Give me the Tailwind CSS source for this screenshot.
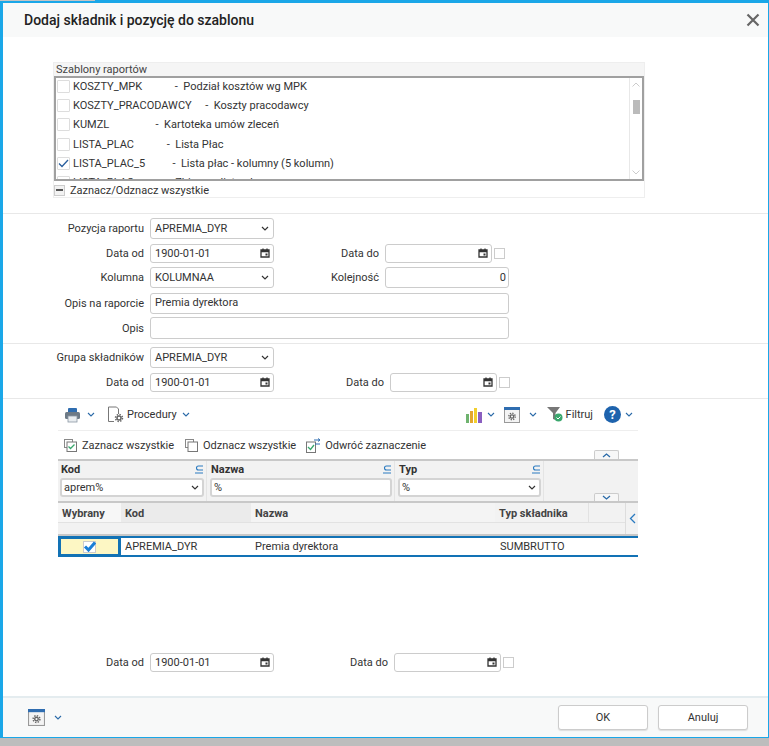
<!DOCTYPE html>
<html lang="pl">
<head>
<meta charset="UTF-8">
<title>Dodaj składnik i pozycję do szablonu</title>
<script src="https://cdn.jsdelivr.net/npm/@tailwindcss/browser@4"></script>
</head>
<body class="m-0 bg-[#bdbdbd] font-['Roboto',sans-serif] text-[11px] leading-none text-[#333]">
<div class="relative w-[769px] h-[746px] overflow-hidden flex flex-col">
  <div class="absolute left-0 top-0 w-[95px] h-[1px] bg-[#c4c4c4]"></div>
  <!-- dialog -->
  <div class="h-[738px] bg-white border-t-[3px] border-l-[3px] border-r border-b border-[#1aa7e8] flex flex-col">
    <!-- header -->
    <div class="h-[34px] shrink-0 bg-[#f8f9f9] flex items-center justify-between pl-[21px] pr-[8px]">
      <span class="text-[14px] font-medium text-[#222]">Dodaj składnik i pozycję do szablonu</span>
      <svg width="14" height="14" viewBox="0 0 14 14"><path d="M1.500 1.500l11 11M12.500 1.500l-11 11" stroke="#666" stroke-width="2.200"/></svg>
    </div>

    <!-- templates panel -->
    <div class="ml-[50px] mt-[25px] w-[592px] h-[136px] shrink-0 border border-[#eee] flex flex-col">
      <div class="h-[13px] shrink-0 bg-[#f5f5f5] pl-[2px] text-[#444] leading-[14px]">Szablony raportów</div>
      <div class="h-[105px] shrink-0 border-2 border-[#a0a0a0] flex overflow-hidden">
        <div class="flex-1 -mt-[1px] overflow-hidden">
          <div class="h-[19px] flex items-center pl-[1px]"><span class="w-[13px] h-[13px] border border-[#ddd] rounded-[1px] mr-[3px]"></span><span class="whitespace-pre">KOSZTY_MPK            -  Podział kosztów wg MPK</span></div>
          <div class="h-[19px] flex items-center pl-[1px]"><span class="w-[13px] h-[13px] border border-[#ddd] rounded-[1px] mr-[3px]"></span><span class="whitespace-pre">KOSZTY_PRACODAWCY     -  Koszty pracodawcy</span></div>
          <div class="h-[19px] flex items-center pl-[1px]"><span class="w-[13px] h-[13px] border border-[#ddd] rounded-[1px] mr-[3px]"></span><span class="whitespace-pre">KUMZL                 -  Kartoteka umów zleceń</span></div>
          <div class="h-[20px] flex items-center pl-[1px]"><span class="w-[13px] h-[13px] border border-[#ddd] rounded-[1px] mr-[3px]"></span><span class="whitespace-pre">LISTA_PLAC            -  Lista Płac</span></div>
          <div class="h-[19px] flex items-center pl-[1px]"><span class="w-[13px] h-[13px] border border-[#ddd] rounded-[1px] mr-[3px] flex items-center justify-center"><svg width="11" height="9" viewBox="0 0 11 9"><path d="M1 4.500l3 3 6-6.500" fill="none" stroke="#2a5f9e" stroke-width="1.300"/></svg></span><span class="whitespace-pre">LISTA_PLAC_5          -  Lista płac - kolumny (5 kolumn)</span></div>
          <div class="h-[19px] flex items-center pl-[1px]"><span class="w-[13px] h-[13px] border border-[#ddd] rounded-[1px] mr-[3px]"></span><span class="whitespace-pre">LISTA_PLAC            -  Zbiorcza lista płac</span></div>
        </div>
        <div class="w-[13px] shrink-0 border-l border-[#e8e8e8] flex flex-col items-center py-[4px]">
          <svg width="8" height="5" viewBox="0 0 8 5"><path d="M.5 4.500L4 1l3.500 3.500" fill="none" stroke="#ccc"/></svg>
          <div class="w-[7px] h-[14px] bg-[#bbb] mt-[13px]"></div>
          <svg class="mt-auto" width="8" height="5" viewBox="0 0 8 5"><path d="M.5 .5L4 4 7.500 .5" fill="none" stroke="#ccc"/></svg>
        </div>
      </div>
      <div class="flex-1 flex items-center pt-[2px]">
        <span class="w-[11px] h-[11px] border border-[#ccc] bg-[#f2f2f2] flex items-center justify-center mr-[5px]"><span class="w-[7px] h-[1.500px] bg-[#555]"></span></span>
        <span>Zaznacz/Odznacz wszystkie</span>
      </div>
    </div>

    <!-- report position form -->
    <div class="mt-[15px] border-t border-[#e8e8e8] pt-[3px] h-[130px] shrink-0 flex flex-col">
      <div class="h-[22px] flex items-center">
        <label class="w-[141px] text-right mr-[6px]">Pozycja raportu</label>
        <div class="w-[124px] h-[21px] border border-[#ccc] rounded-[3px] flex items-center justify-between px-[4px]"><span>APREMIA_DYR</span><svg width="8" height="5" viewBox="0 0 8 5"><path d="M1 1l3 3 3-3" fill="none" stroke="#333" stroke-width="1.200"/></svg></div>
      </div>
      <div class="h-[20px] mt-[4px] flex items-center">
        <label class="w-[141px] text-right mr-[6px]">Data od</label>
        <div class="w-[124px] h-[19px] border border-[#ccc] rounded-[3px] flex items-center justify-between pl-[4px] pr-[3px]"><span>1900-01-01</span><svg width="10" height="10" viewBox="0 0 10 10"><path d="M1 2h8v7H1zM1 3.500h8M3 .5v2M7 .5v2" fill="none" stroke="#333" stroke-width="1.300"/><rect x="5.500" y="5.500" width="2" height="2" fill="#333"/></svg></div>
        <label class="w-[105px] text-right mr-[6px]">Data do</label>
        <div class="w-[107px] h-[19px] border border-[#ccc] rounded-[3px] flex items-center justify-end pr-[3px]"><svg width="10" height="10" viewBox="0 0 10 10"><path d="M1 2h8v7H1zM1 3.500h8M3 .5v2M7 .5v2" fill="none" stroke="#333" stroke-width="1.300"/><rect x="5.500" y="5.500" width="2" height="2" fill="#333"/></svg></div>
        <span class="ml-[2px] w-[11px] h-[11px] border border-[#ccc]"></span>
      </div>
      <div class="h-[21px] mt-[4px] flex items-center">
        <label class="w-[141px] text-right mr-[6px]">Kolumna</label>
        <div class="w-[124px] h-[21px] border border-[#ccc] rounded-[3px] flex items-center justify-between px-[4px]"><span>KOLUMNAA</span><svg width="8" height="5" viewBox="0 0 8 5"><path d="M1 1l3 3 3-3" fill="none" stroke="#333" stroke-width="1.200"/></svg></div>
        <label class="w-[105px] text-right mr-[6px]">Kolejność</label>
        <div class="w-[124px] h-[21px] border border-[#ccc] rounded-[3px] flex items-center justify-end pr-[2px]">0</div>
      </div>
      <div class="h-[21px] mt-[5px] flex items-center">
        <label class="w-[141px] text-right mr-[6px]">Opis na raporcie</label>
        <div class="w-[359px] h-[21px] border border-[#ccc] rounded-[3px] flex items-center pl-[4px] pb-[2px]">Premia dyrektora</div>
      </div>
      <div class="h-[22px] mt-[3px] flex items-center">
        <label class="w-[141px] text-right mr-[6px]">Opis</label>
        <div class="w-[359px] h-[22px] border border-[#ccc] rounded-[3px]"></div>
      </div>
    </div>

    <!-- component group form -->
    <div class="border-t border-[#e8e8e8] pt-[3px] h-[55px] shrink-0 flex flex-col">
      <div class="h-[21px] flex items-center">
        <label class="w-[141px] text-right mr-[6px]">Grupa składników</label>
        <div class="w-[124px] h-[21px] border border-[#ccc] rounded-[3px] flex items-center justify-between px-[4px]"><span>APREMIA_DYR</span><svg width="8" height="5" viewBox="0 0 8 5"><path d="M1 1l3 3 3-3" fill="none" stroke="#333" stroke-width="1.200"/></svg></div>
      </div>
      <div class="h-[20px] mt-[4px] flex items-center">
        <label class="w-[141px] text-right mr-[6px]">Data od</label>
        <div class="w-[124px] h-[19px] border border-[#ccc] rounded-[3px] flex items-center justify-between pl-[4px] pr-[3px]"><span>1900-01-01</span><svg width="10" height="10" viewBox="0 0 10 10"><path d="M1 2h8v7H1zM1 3.500h8M3 .5v2M7 .5v2" fill="none" stroke="#333" stroke-width="1.300"/><rect x="5.500" y="5.500" width="2" height="2" fill="#333"/></svg></div>
        <label class="w-[110px] text-right mr-[6px]">Data do</label>
        <div class="w-[107px] h-[19px] border border-[#ccc] rounded-[3px] flex items-center justify-end pr-[3px]"><svg width="10" height="10" viewBox="0 0 10 10"><path d="M1 2h8v7H1zM1 3.500h8M3 .5v2M7 .5v2" fill="none" stroke="#333" stroke-width="1.300"/><rect x="5.500" y="5.500" width="2" height="2" fill="#333"/></svg></div>
        <span class="ml-[2px] w-[11px] h-[11px] border border-[#ccc]"></span>
      </div>
    </div>

    <!-- list section -->
    <div class="border-t border-[#e8e8e8] shrink-0 pl-[55px]">
      <div class="w-[580px]">
        <!-- toolbar -->
        <div class="h-[32px] flex items-center border-b border-[#eee] relative">
          <svg class="ml-[6px]" width="17" height="16" viewBox="0 0 17 16"><rect x="4" y="1" width="9" height="5" rx="1" fill="#2f6db0"/><rect x="1" y="5" width="15" height="7" rx="1.500" fill="#6d7a86"/><rect x="4" y="9" width="9" height="6" fill="#e9edf0" stroke="#8a97a3" stroke-width=".8"/></svg>
          <svg class="ml-[6px]" width="8" height="5" viewBox="0 0 8 5"><path d="M1 1l3 3 3-3" fill="none" stroke="#2a6aa8" stroke-width="1.100"/></svg>
          <svg class="ml-[12px]" width="17" height="17" viewBox="0 0 17 17"><path d="M1.500 1h8l2 2v5M7 15.500H1.500V1" fill="none" stroke="#777"/><circle cx="12" cy="12" r="2" fill="none" stroke="#666" stroke-width="1.500"/><circle cx="12" cy="12" r="3.500" fill="none" stroke="#666" stroke-width="1.500" stroke-dasharray="1.400 1.350"/></svg>
          <span class="ml-[3px]">Procedury</span>
          <svg class="ml-[5px]" width="8" height="5" viewBox="0 0 8 5"><path d="M1 1l3 3 3-3" fill="none" stroke="#2a6aa8" stroke-width="1.100"/></svg>
          <div class="ml-auto flex items-center pr-[5px]">
            <svg width="16" height="16" viewBox="0 0 16 16"><rect x="0" y="7" width="3" height="9" fill="#6fb36f"/><rect x="4" y="4" width="3" height="12" fill="#e4a72c"/><rect x="8" y="1" width="3" height="15" fill="#f2cf2e"/><rect x="12" y="5" width="4" height="11" fill="#8a5fc0"/></svg>
            <svg class="ml-[5px]" width="8" height="5" viewBox="0 0 8 5"><path d="M1 1l3 3 3-3" fill="none" stroke="#2a6aa8" stroke-width="1.100"/></svg>
            <svg class="ml-[9px]" width="16" height="16" viewBox="0 0 16 16"><rect x=".5" y=".5" width="15" height="15" fill="#f4f4f4" stroke="#999"/><rect x="0" y="0" width="16" height="3" fill="#2f6db0"/><circle cx="8" cy="9.500" r="1.700" fill="none" stroke="#666" stroke-width="1.300"/><circle cx="8" cy="9.500" r="3.200" fill="none" stroke="#666" stroke-width="1.400" stroke-dasharray="1.300 1.200"/></svg>
            <svg class="ml-[9px]" width="8" height="5" viewBox="0 0 8 5"><path d="M1 1l3 3 3-3" fill="none" stroke="#2a6aa8" stroke-width="1.100"/></svg>
            <svg class="ml-[10px]" width="16" height="15" viewBox="0 0 16 15"><path d="M0 0h13L8.500 6v7l-2.500-1V6z" fill="#777"/><circle cx="11.500" cy="10.500" r="4" fill="#3aa76d"/><path d="M9.500 10.500l1.500 1.500 2.500-2.500" fill="none" stroke="#fff"/></svg>
            <span class="ml-[3px]">Filtruj</span>
            <span class="ml-[11px] w-[17px] h-[17px] rounded-full bg-[#1e63ad] text-white font-bold text-[13px] flex items-center justify-center">?</span>
            <svg class="ml-[4px]" width="8" height="5" viewBox="0 0 8 5"><path d="M1 1l3 3 3-3" fill="none" stroke="#2a6aa8" stroke-width="1.100"/></svg>
          </div>
        </div>
        <!-- selection actions -->
        <div class="h-[28px] flex items-center pl-[6px] relative">
          <svg width="13" height="13" viewBox="0 0 13 13"><rect x=".5" y=".5" width="8" height="8" fill="none" stroke="#888"/><rect x="3" y="3" width="9.500" height="9.500" fill="#fff" stroke="#777"/><path d="M4.500 7.500l2 2 4-4" fill="none" stroke="#3aa76d" stroke-width="1.300"/></svg>
          <span class="ml-[5px]">Zaznacz wszystkie</span>
          <svg class="ml-[11px]" width="13" height="13" viewBox="0 0 13 13"><rect x=".5" y=".5" width="8" height="8" fill="none" stroke="#888"/><rect x="3" y="3" width="9.500" height="9.500" fill="#fff" stroke="#777"/></svg>
          <span class="ml-[5px]">Odznacz wszystkie</span>
          <svg class="ml-[10px]" width="15" height="15" viewBox="0 0 15 15"><rect x=".5" y="4" width="9" height="10.500" fill="#fff" stroke="#777"/><path d="M2 9l2.500 2.500L8 7" fill="none" stroke="#3aa76d" stroke-width="1.300"/><path d="M8 2h6M12 .5L14 2l-2 1.500M14 6H9" fill="none" stroke="#2f6db0"/></svg>
          <span class="ml-[4px]">Odwróć zaznaczenie</span>
          <div class="absolute left-[536px] bottom-0 w-[25px] h-[9px] border border-b-0 border-[#ccc] rounded-t-[2px] bg-[#f7f7f7] flex items-center justify-center"><svg width="9" height="5" viewBox="0 0 9 5"><path d="M1 4l3.500-3L8 4" fill="none" stroke="#2a6aa8" stroke-width="1.300"/></svg></div>
        </div>
        <!-- filter row -->
        <div class="h-[44px] border-t-2 border-b-2 border-[#c8c8c8] bg-[#f2f2f2] flex relative">
          <div class="w-[149px] pl-[2px] pr-[2px] border-r border-[#e4e4e4]">
            <div class="h-[17px] flex items-center justify-between font-bold pl-[1px]"><span>Kod</span><svg width="9" height="9" viewBox="0 0 9 9"><path d="M8 1H3.500a2 2 0 0 0 0 4H8M0 8h8" fill="none" stroke="#2a7ac0" stroke-width="1.100"/></svg></div>
            <div class="h-[19px] bg-white border-2 border-[#d4d4d4] rounded-[3px] flex items-center justify-between pl-[2px] pr-[3px]"><span>aprem%</span><svg width="8" height="5" viewBox="0 0 8 5"><path d="M1 1l3 3 3-3" fill="none" stroke="#333" stroke-width="1.200"/></svg></div>
          </div>
          <div class="w-[188px] pl-[3px] pr-[2px] border-r border-[#e4e4e4]">
            <div class="h-[17px] flex items-center justify-between font-bold pl-[1px]"><span>Nazwa</span><svg width="9" height="9" viewBox="0 0 9 9"><path d="M8 1H3.500a2 2 0 0 0 0 4H8M0 8h8" fill="none" stroke="#2a7ac0" stroke-width="1.100"/></svg></div>
            <div class="h-[19px] bg-white border-2 border-[#d4d4d4] rounded-[3px] flex items-center pl-[2px]">%</div>
          </div>
          <div class="w-[149px] pl-[3px] pr-[2px] border-r border-[#e4e4e4]">
            <div class="h-[17px] flex items-center justify-between font-bold pl-[1px]"><span>Typ</span><svg width="9" height="9" viewBox="0 0 9 9"><path d="M8 1H3.500a2 2 0 0 0 0 4H8M0 8h8" fill="none" stroke="#2a7ac0" stroke-width="1.100"/></svg></div>
            <div class="h-[19px] bg-white border-2 border-[#d4d4d4] rounded-[3px] flex items-center justify-between pl-[2px] pr-[3px]"><span>%</span><svg width="8" height="5" viewBox="0 0 8 5"><path d="M1 1l3 3 3-3" fill="none" stroke="#333" stroke-width="1.200"/></svg></div>
          </div>
          <div class="absolute left-[536px] bottom-0 w-[25px] h-[8px] border border-b-0 border-[#ccc] rounded-t-[2px] bg-[#f7f7f7] flex items-center justify-center"><svg width="9" height="5" viewBox="0 0 9 5"><path d="M1 1l3.500 3L8 1" fill="none" stroke="#2a6aa8" stroke-width="1.300"/></svg></div>
        </div>
        <!-- table head -->
        <div class="flex h-[33px] bg-[#f2f2f2] font-bold text-[#444] border-b-2 border-[#c8c8c8] relative">
          <div class="flex flex-1 h-[20px] border-b border-[#e2e2e2]">
            <div class="w-[63px] pl-[4px] pt-[1px] flex items-center bg-[#f7f7f7]">Wybrany</div>
            <div class="w-[130px] pl-[4px] pt-[1px] flex items-center bg-[#ebebeb]">Kod</div>
            <div class="w-[244px] pl-[4px] pt-[1px] flex items-center bg-[#f4f4f4]">Nazwa</div>
            <div class="w-[94px] pl-[4px] pt-[1px] flex items-center border-r border-[#e2e2e2]">Typ składnika</div>
            <div class="flex-1"></div>
          </div>
          <div class="w-[13px] border-l border-[#ddd] flex items-center justify-center"><svg width="7" height="11" viewBox="0 0 7 11"><path d="M6 1L1.500 5.500 6 10" fill="none" stroke="#2a7ac0" stroke-width="1.300"/></svg></div>
        </div>
        <!-- selected row -->
        <div class="flex h-[21px] border-t-2 border-b-2 border-[#1272b5]">
          <div class="w-[63px] -my-[2px] border-[3px] border-[#1272b5] bg-[#fdf7c4] flex items-center justify-center"><span class="w-[13px] h-[12px] bg-white border border-[#ccc] flex items-center justify-center"><svg class="shrink-0" width="13" height="11" viewBox="0 0 13 11"><path d="M2 5.500l3.500 3.500L12 1.500" fill="none" stroke="#1a7fd6" stroke-width="3"/></svg></span></div>
          <div class="w-[130px] pl-[4px] flex items-center">APREMIA_DYR</div>
          <div class="w-[245px] pl-[4px] flex items-center">Premia dyrektora</div>
          <div class="flex-1 pl-[4px] flex items-center">SUMBRUTTO</div>
        </div>
      </div>
    </div>

    <!-- bottom dates -->
    <div class="mt-[95px] h-[20px] shrink-0 flex items-center">
      <label class="w-[141px] text-right mr-[6px]">Data od</label>
      <div class="w-[124px] h-[19px] border border-[#ccc] rounded-[3px] flex items-center justify-between pl-[4px] pr-[3px]"><span>1900-01-01</span><svg width="10" height="10" viewBox="0 0 10 10"><path d="M1 2h8v7H1zM1 3.500h8M3 .5v2M7 .5v2" fill="none" stroke="#333" stroke-width="1.300"/><rect x="5.500" y="5.500" width="2" height="2" fill="#333"/></svg></div>
      <label class="w-[114px] text-right mr-[6px]">Data do</label>
      <div class="w-[107px] h-[19px] border border-[#ccc] rounded-[3px] flex items-center justify-end pr-[3px]"><svg width="10" height="10" viewBox="0 0 10 10"><path d="M1 2h8v7H1zM1 3.500h8M3 .5v2M7 .5v2" fill="none" stroke="#333" stroke-width="1.300"/><rect x="5.500" y="5.500" width="2" height="2" fill="#333"/></svg></div>
      <span class="ml-[2px] w-[11px] h-[11px] border border-[#ccc]"></span>
    </div>

    <!-- footer -->
    <div class="mt-auto h-[41px] shrink-0 bg-[#f8f9f9] border-t-2 border-[#e4ecef] flex items-center pl-[25px] pr-[20px]">
      <svg width="17" height="17" viewBox="0 0 16 16"><rect x=".5" y=".5" width="15" height="15" fill="#f4f4f4" stroke="#999"/><rect x="0" y="0" width="16" height="3" fill="#2f6db0"/><circle cx="8" cy="9.500" r="1.700" fill="none" stroke="#666" stroke-width="1.300"/><circle cx="8" cy="9.500" r="3.200" fill="none" stroke="#666" stroke-width="1.400" stroke-dasharray="1.300 1.200"/></svg>
      <svg class="ml-[9px]" width="8" height="5" viewBox="0 0 8 5"><path d="M1 1l3 3 3-3" fill="none" stroke="#2a6aa8" stroke-width="1.100"/></svg>
      <button class="ml-auto w-[90px] h-[25px] bg-white border border-[#ccc] rounded-[3px] shadow-[0_1px_1px_#ddd]">OK</button>
      <button class="ml-[10px] w-[90px] h-[25px] bg-white border border-[#ccc] rounded-[3px] shadow-[0_1px_1px_#ddd]">Anuluj</button>
    </div>
  </div>
</div>
</body>
</html>
